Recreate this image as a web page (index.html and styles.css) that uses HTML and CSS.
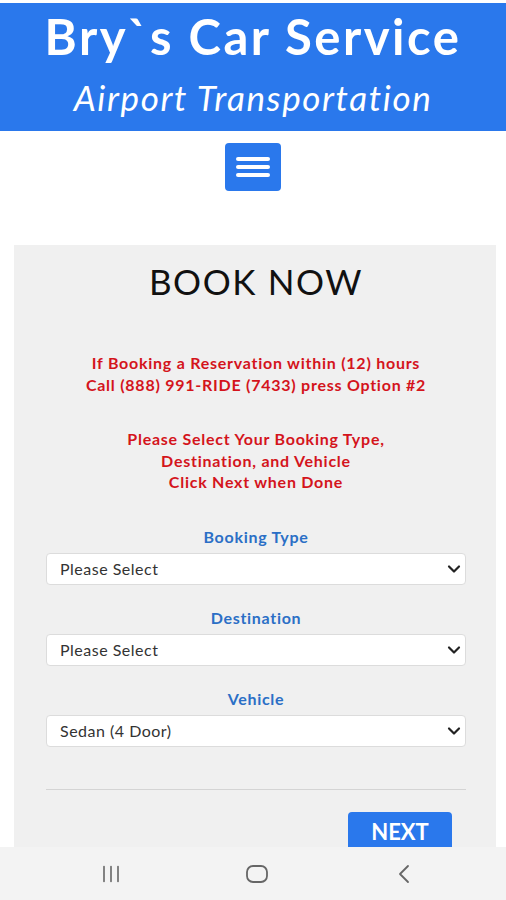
FILE: index.html
```html
<!DOCTYPE html>
<html lang="en">
<head>
<meta charset="utf-8">
<title>Bry`s Car Service</title>
<link rel="stylesheet" href="styles.css">
</head>
<body>
<header class="site-header">
  <div class="brand">Bry`s Car Service</div>
  <div class="tagline">Airport Transportation</div>
</header>
<div class="menu-row">
  <button class="menu-btn" aria-label="Menu">
    <span class="bar"></span><span class="bar"></span><span class="bar"></span>
  </button>
</div>
<main class="card">
  <h1 class="card-title">BOOK NOW</h1>
  <p class="notice">If Booking a Reservation within (12) hours<br>Call (888) 991-RIDE (7433) press Option #2</p>
  <p class="notice notice-2">Please Select Your Booking Type,<br>Destination, and Vehicle<br>Click Next when Done</p>

  <div class="field">
    <label class="field-label">Booking Type</label>
    <div class="select-wrap">
      <select class="select"><option>Please Select</option></select>
      <svg class="chev" width="14" height="10" viewBox="0 0 14 10"><path d="M2 2.5 L7 7.5 L12 2.5" fill="none" stroke="#222" stroke-width="2.2" stroke-linecap="round" stroke-linejoin="round"/></svg>
    </div>
  </div>
  <div class="field">
    <label class="field-label">Destination</label>
    <div class="select-wrap">
      <select class="select"><option>Please Select</option></select>
      <svg class="chev" width="14" height="10" viewBox="0 0 14 10"><path d="M2 2.5 L7 7.5 L12 2.5" fill="none" stroke="#222" stroke-width="2.2" stroke-linecap="round" stroke-linejoin="round"/></svg>
    </div>
  </div>
  <div class="field">
    <label class="field-label">Vehicle</label>
    <div class="select-wrap">
      <select class="select"><option>Sedan (4 Door)</option></select>
      <svg class="chev" width="14" height="10" viewBox="0 0 14 10"><path d="M2 2.5 L7 7.5 L12 2.5" fill="none" stroke="#222" stroke-width="2.2" stroke-linecap="round" stroke-linejoin="round"/></svg>
    </div>
  </div>

  <hr class="divider">
  <div class="actions">
    <button class="next-btn">NEXT</button>
  </div>
</main>

<nav class="sys-nav">
  <svg class="nav-icon nav-recent" width="20" height="18" viewBox="0 0 20 18"><path d="M3 1.5 V16.5 M10 1.5 V16.5 M17 1.5 V16.5" stroke="#666" stroke-width="1.6" stroke-linecap="round"/></svg>
  <svg class="nav-icon nav-home" width="24" height="20" viewBox="0 0 24 20"><rect x="2" y="2" width="20" height="16" rx="6" fill="none" stroke="#666" stroke-width="1.8"/></svg>
  <svg class="nav-icon nav-back" width="14" height="20" viewBox="0 0 14 20"><path d="M11 2 L3 10 L11 18" fill="none" stroke="#666" stroke-width="1.8" stroke-linecap="round" stroke-linejoin="round"/></svg>
</nav>
</body>
</html>
```

FILE: styles.css
```css
* { box-sizing: border-box; }

html, body {
  margin: 0;
  padding: 0;
  background: #ffffff;
  font-family: Lato, "Open Sans", "Liberation Sans", sans-serif;
}

body {
  padding-top: 3px;
  padding-bottom: 60px;
}

.site-header {
  background: #2a78ec;
  color: #ffffff;
  height: 128px;
  display: flex;
  flex-direction: column;
  align-items: center;
  text-align: center;
}

.brand {
  font-weight: 700;
  font-size: 49px;
  line-height: 58px;
  margin-top: 4px;
  letter-spacing: 2.5px;
}

.tagline {
  font-style: italic;
  font-size: 35px;
  line-height: 40px;
  margin-top: 12px;
  letter-spacing: 1.6px;
}

.menu-row {
  display: flex;
  justify-content: center;
  padding-top: 12px;
}

.menu-btn {
  width: 56px;
  height: 48px;
  background: #2a78ec;
  border: none;
  border-radius: 4px;
  display: flex;
  flex-direction: column;
  align-items: center;
  justify-content: center;
  gap: 4px;
  padding: 0;
}

.menu-btn .bar {
  display: block;
  width: 34px;
  height: 4px;
  border-radius: 2px;
  background: #ffffff;
}

.card {
  background: #f0f0f0;
  margin: 54px 10px 0 14px;
  padding: 15px 30px 40px 32px;
  min-height: 620px;
}

.card-title {
  margin: 0;
  text-align: center;
  font-weight: 400;
  font-size: 35px;
  line-height: 42px;
  color: #111111;
  letter-spacing: 1.6px;
}

.notice {
  margin: 50px 0 0 0;
  text-align: center;
  color: #d4141c;
  font-weight: 700;
  font-size: 16px;
  line-height: 21.5px;
  letter-spacing: 0.75px;
}

.notice-2 {
  margin-top: 33px;
}

.field {
  margin-top: 23px;
  display: flex;
  flex-direction: column;
}

.field:first-of-type {
  margin-top: 34px;
}

.field-label {
  text-align: center;
  color: #2b6fc6;
  font-weight: 700;
  font-size: 16px;
  line-height: 20px;
  margin-bottom: 6px;
  letter-spacing: 0.7px;
}

.select-wrap {
  position: relative;
}

.select {
  -webkit-appearance: none;
  appearance: none;
  width: 100%;
  height: 32px;
  background: #ffffff;
  border: 1px solid #dcdcdc;
  border-radius: 4px;
  padding: 0 30px 0 13px;
  font-family: Lato, "Open Sans", "Liberation Sans", sans-serif;
  font-size: 16px;
  letter-spacing: 0.5px;
  color: #333333;
}

.chev {
  position: absolute;
  right: 5px;
  top: 11px;
  pointer-events: none;
}

.divider {
  margin: 42px 0 0 0;
  border: none;
  border-top: 1px solid #d4d4d4;
}

.actions {
  display: flex;
  justify-content: flex-end;
  padding-top: 22px;
  padding-right: 14px;
}

.next-btn {
  width: 104px;
  height: 44px;
  background: #2a78ec;
  color: #ffffff;
  border: none;
  border-radius: 4px;
  font-family: Lato, "Open Sans", "Liberation Sans", sans-serif;
  font-weight: 700;
  font-size: 22px;
  padding: 0 0 4px 0;
}

.sys-nav {
  position: fixed;
  left: 0;
  right: 0;
  bottom: 0;
  height: 53px;
  background: #f3f3f3;
  display: flex;
  align-items: center;
  padding-left: 101px;
}

.nav-icon {
  display: block;
  flex: none;
}

.nav-home {
  margin-left: 124px;
}

.nav-back {
  margin-left: 128px;
}
```
